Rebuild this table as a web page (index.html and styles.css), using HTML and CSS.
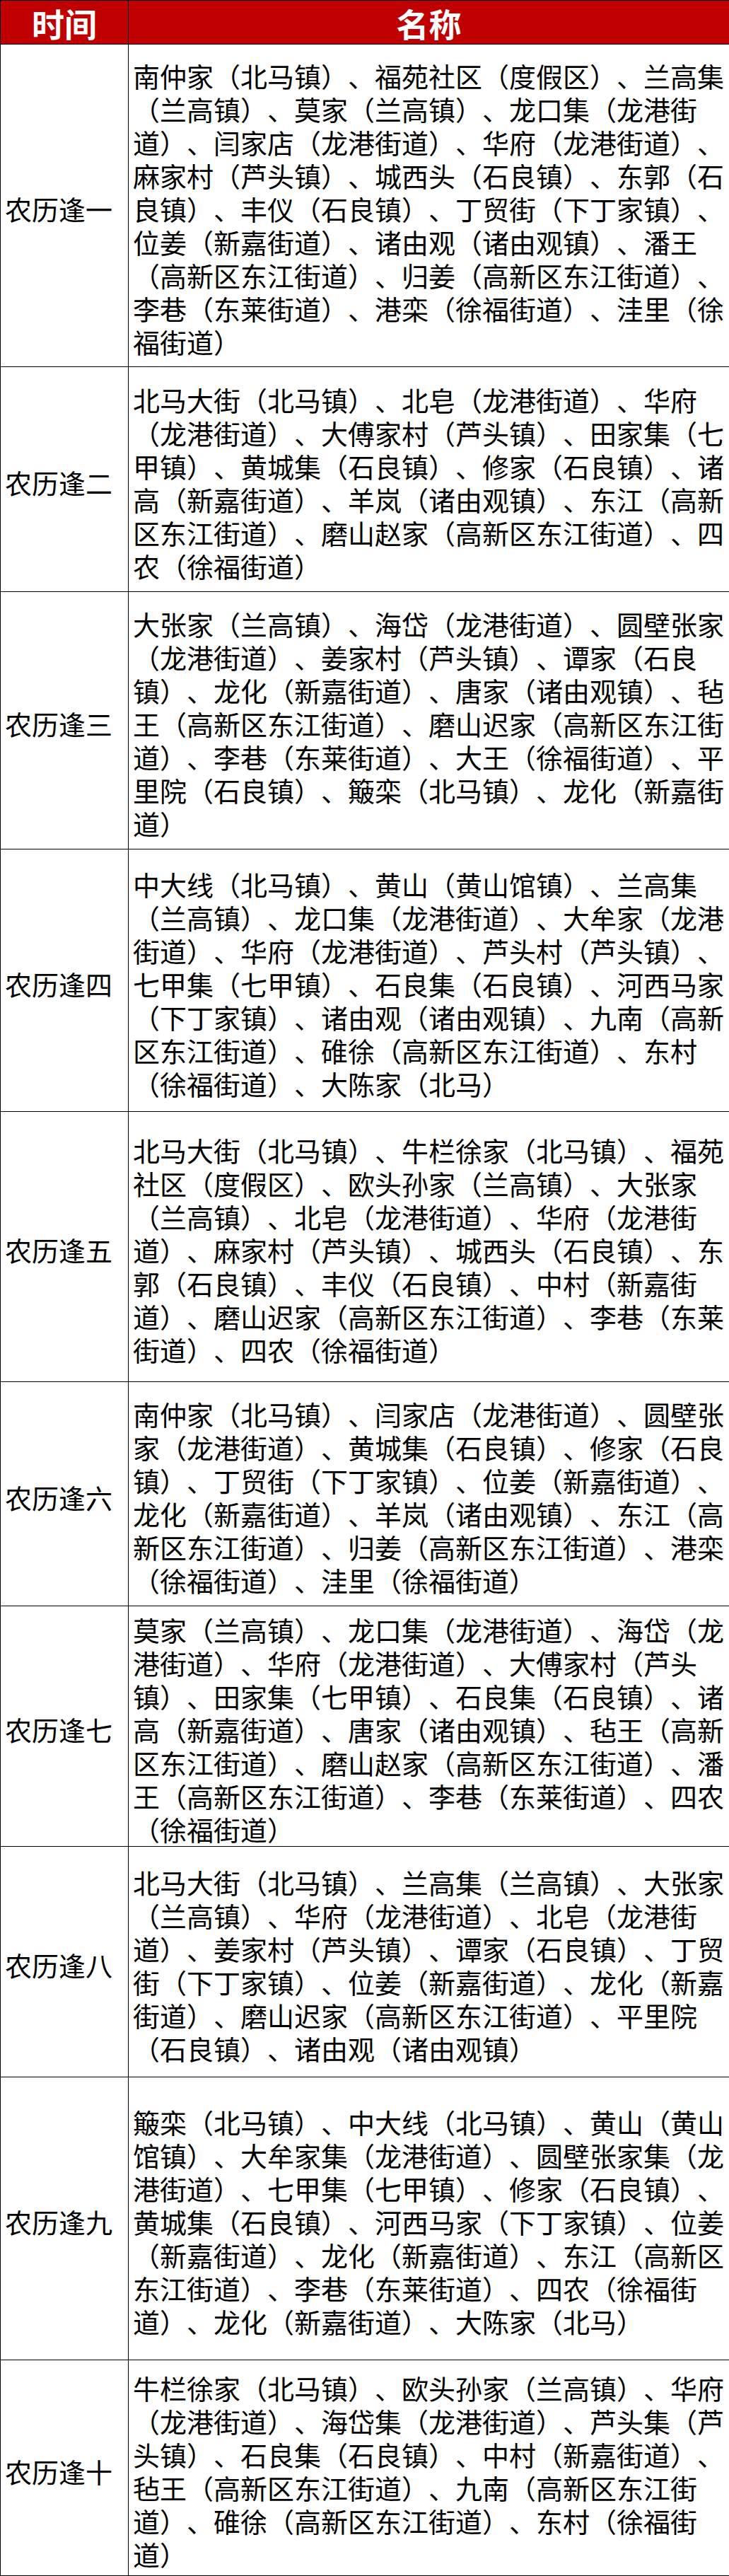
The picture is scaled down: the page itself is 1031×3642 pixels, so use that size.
FILE: index.html
```html
<!DOCTYPE html>
<html lang="zh-CN">
<head>
<meta charset="utf-8">
<title>农历集市时间表</title>
<link rel="stylesheet" href="styles.css">
</head>
<body>
<table class="market">
  <colgroup>
    <col class="col-time">
    <col class="col-name">
  </colgroup>
  <thead>
    <tr class="head-row">
      <th class="head-cell">时间</th>
      <th class="head-cell">名称</th>
    </tr>
  </thead>
  <tbody>
    <tr class="row-1">
      <td class="label">农历逢一</td>
      <td class="names">南仲家（北马镇）、福苑社区（度假区）、兰高集（兰高镇）、莫家（兰高镇）、龙口集（龙港街道）、闫家店（龙港街道）、华府（龙港街道）、麻家村（芦头镇）、城西头（石良镇）、东郭（石良镇）、丰仪（石良镇）、丁贸街（下丁家镇）、位姜（新嘉街道）、诸由观（诸由观镇）、潘王（高新区东江街道）、归姜（高新区东江街道）、李巷（东莱街道）、港栾（徐福街道）、洼里（徐福街道）</td>
    </tr>
    <tr class="row-2">
      <td class="label">农历逢二</td>
      <td class="names">北马大街（北马镇）、北皂（龙港街道）、华府（龙港街道）、大傅家村（芦头镇）、田家集（七甲镇）、黄城集（石良镇）、修家（石良镇）、诸高（新嘉街道）、羊岚（诸由观镇）、东江（高新区东江街道）、磨山赵家（高新区东江街道）、四农（徐福街道）</td>
    </tr>
    <tr class="row-3">
      <td class="label">农历逢三</td>
      <td class="names">大张家（兰高镇）、海岱（龙港街道）、圆壁张家（龙港街道）、姜家村（芦头镇）、谭家（石良镇）、龙化（新嘉街道）、唐家（诸由观镇）、毡王（高新区东江街道）、磨山迟家（高新区东江街道）、李巷（东莱街道）、大王（徐福街道）、平里院（石良镇）、簸栾（北马镇）、龙化（新嘉街道）</td>
    </tr>
    <tr class="row-4">
      <td class="label">农历逢四</td>
      <td class="names">中大线（北马镇）、黄山（黄山馆镇）、兰高集（兰高镇）、龙口集（龙港街道）、大牟家（龙港街道）、华府（龙港街道）、芦头村（芦头镇）、七甲集（七甲镇）、石良集（石良镇）、河西马家（下丁家镇）、诸由观（诸由观镇）、九南（高新区东江街道）、碓徐（高新区东江街道）、东村（徐福街道）、大陈家（北马）</td>
    </tr>
    <tr class="row-5">
      <td class="label">农历逢五</td>
      <td class="names">北马大街（北马镇）、牛栏徐家（北马镇）、福苑社区（度假区）、欧头孙家（兰高镇）、大张家（兰高镇）、北皂（龙港街道）、华府（龙港街道）、麻家村（芦头镇）、城西头（石良镇）、东郭（石良镇）、丰仪（石良镇）、中村（新嘉街道）、磨山迟家（高新区东江街道）、李巷（东莱街道）、四农（徐福街道）</td>
    </tr>
    <tr class="row-6">
      <td class="label">农历逢六</td>
      <td class="names">南仲家（北马镇）、闫家店（龙港街道）、圆壁张家（龙港街道）、黄城集（石良镇）、修家（石良镇）、丁贸街（下丁家镇）、位姜（新嘉街道）、龙化（新嘉街道）、羊岚（诸由观镇）、东江（高新区东江街道）、归姜（高新区东江街道）、港栾（徐福街道）、洼里（徐福街道）</td>
    </tr>
    <tr class="row-7">
      <td class="label">农历逢七</td>
      <td class="names">莫家（兰高镇）、龙口集（龙港街道）、海岱（龙港街道）、华府（龙港街道）、大傅家村（芦头镇）、田家集（七甲镇）、石良集（石良镇）、诸高（新嘉街道）、唐家（诸由观镇）、毡王（高新区东江街道）、磨山赵家（高新区东江街道）、潘王（高新区东江街道）、李巷（东莱街道）、四农（徐福街道）</td>
    </tr>
    <tr class="row-8">
      <td class="label">农历逢八</td>
      <td class="names">北马大街（北马镇）、兰高集（兰高镇）、大张家（兰高镇）、华府（龙港街道）、北皂（龙港街道）、姜家村（芦头镇）、谭家（石良镇）、丁贸街（下丁家镇）、位姜（新嘉街道）、龙化（新嘉街道）、磨山迟家（高新区东江街道）、平里院（石良镇）、诸由观（诸由观镇）</td>
    </tr>
    <tr class="row-9">
      <td class="label">农历逢九</td>
      <td class="names">簸栾（北马镇）、中大线（北马镇）、黄山（黄山馆镇）、大牟家集（龙港街道）、圆壁张家集（龙港街道）、七甲集（七甲镇）、修家（石良镇）、黄城集（石良镇）、河西马家（下丁家镇）、位姜（新嘉街道）、龙化（新嘉街道）、东江（高新区东江街道）、李巷（东莱街道）、四农（徐福街道）、龙化（新嘉街道）、大陈家（北马）</td>
    </tr>
    <tr class="row-10">
      <td class="label">农历逢十</td>
      <td class="names">牛栏徐家（北马镇）、欧头孙家（兰高镇）、华府（龙港街道）、海岱集（龙港街道）、芦头集（芦头镇）、石良集（石良镇）、中村（新嘉街道）、毡王（高新区东江街道）、九南（高新区东江街道）、碓徐（高新区东江街道）、东村（徐福街道）</td>
    </tr>
  </tbody>
</table>
</body>
</html>
```

FILE: styles.css
```css
html, body {
  margin: 0;
  padding: 0;
  background: #ffffff;
}

body {
  font-family: "Noto Sans CJK SC", "Noto Sans", sans-serif;
  color: #000000;
}

.market {
  width: 1031px;
  border-collapse: collapse;
  table-layout: fixed;
  text-spacing-trim: space-all;
}

.col-time {
  width: 181px;
}

.col-name {
  width: 850px;
}

.head-row {
  height: 62px;
}

.head-cell {
  background: #c00000;
  color: #ffffff;
  font-size: 46px;
  font-weight: 700;
  line-height: 56px;
  text-align: center;
  vertical-align: middle;
  padding: 0;
  border: 1px solid #000000;
}

.label,
.names {
  border: 1px solid #000000;
  font-size: 38px;
  line-height: 47px;
  vertical-align: middle;
  text-align: left;
  padding: 8px 4px 0 6px;
  word-break: normal;
  text-spacing-trim: space-all;
}

.label {
  white-space: nowrap;
  padding-left: 6px;
}

.names {
  padding-left: 6px;
}

.row-1 { height: 456px; }
.row-2 { height: 318px; }
.row-3 { height: 364px; }
.row-4 { height: 371px; }
.row-5 { height: 382px; }
.row-6 { height: 317px; }
.row-7 { height: 340px; }
.row-8 { height: 326px; }
.row-9 { height: 400px; }
.row-10 { height: 305px; }
```
